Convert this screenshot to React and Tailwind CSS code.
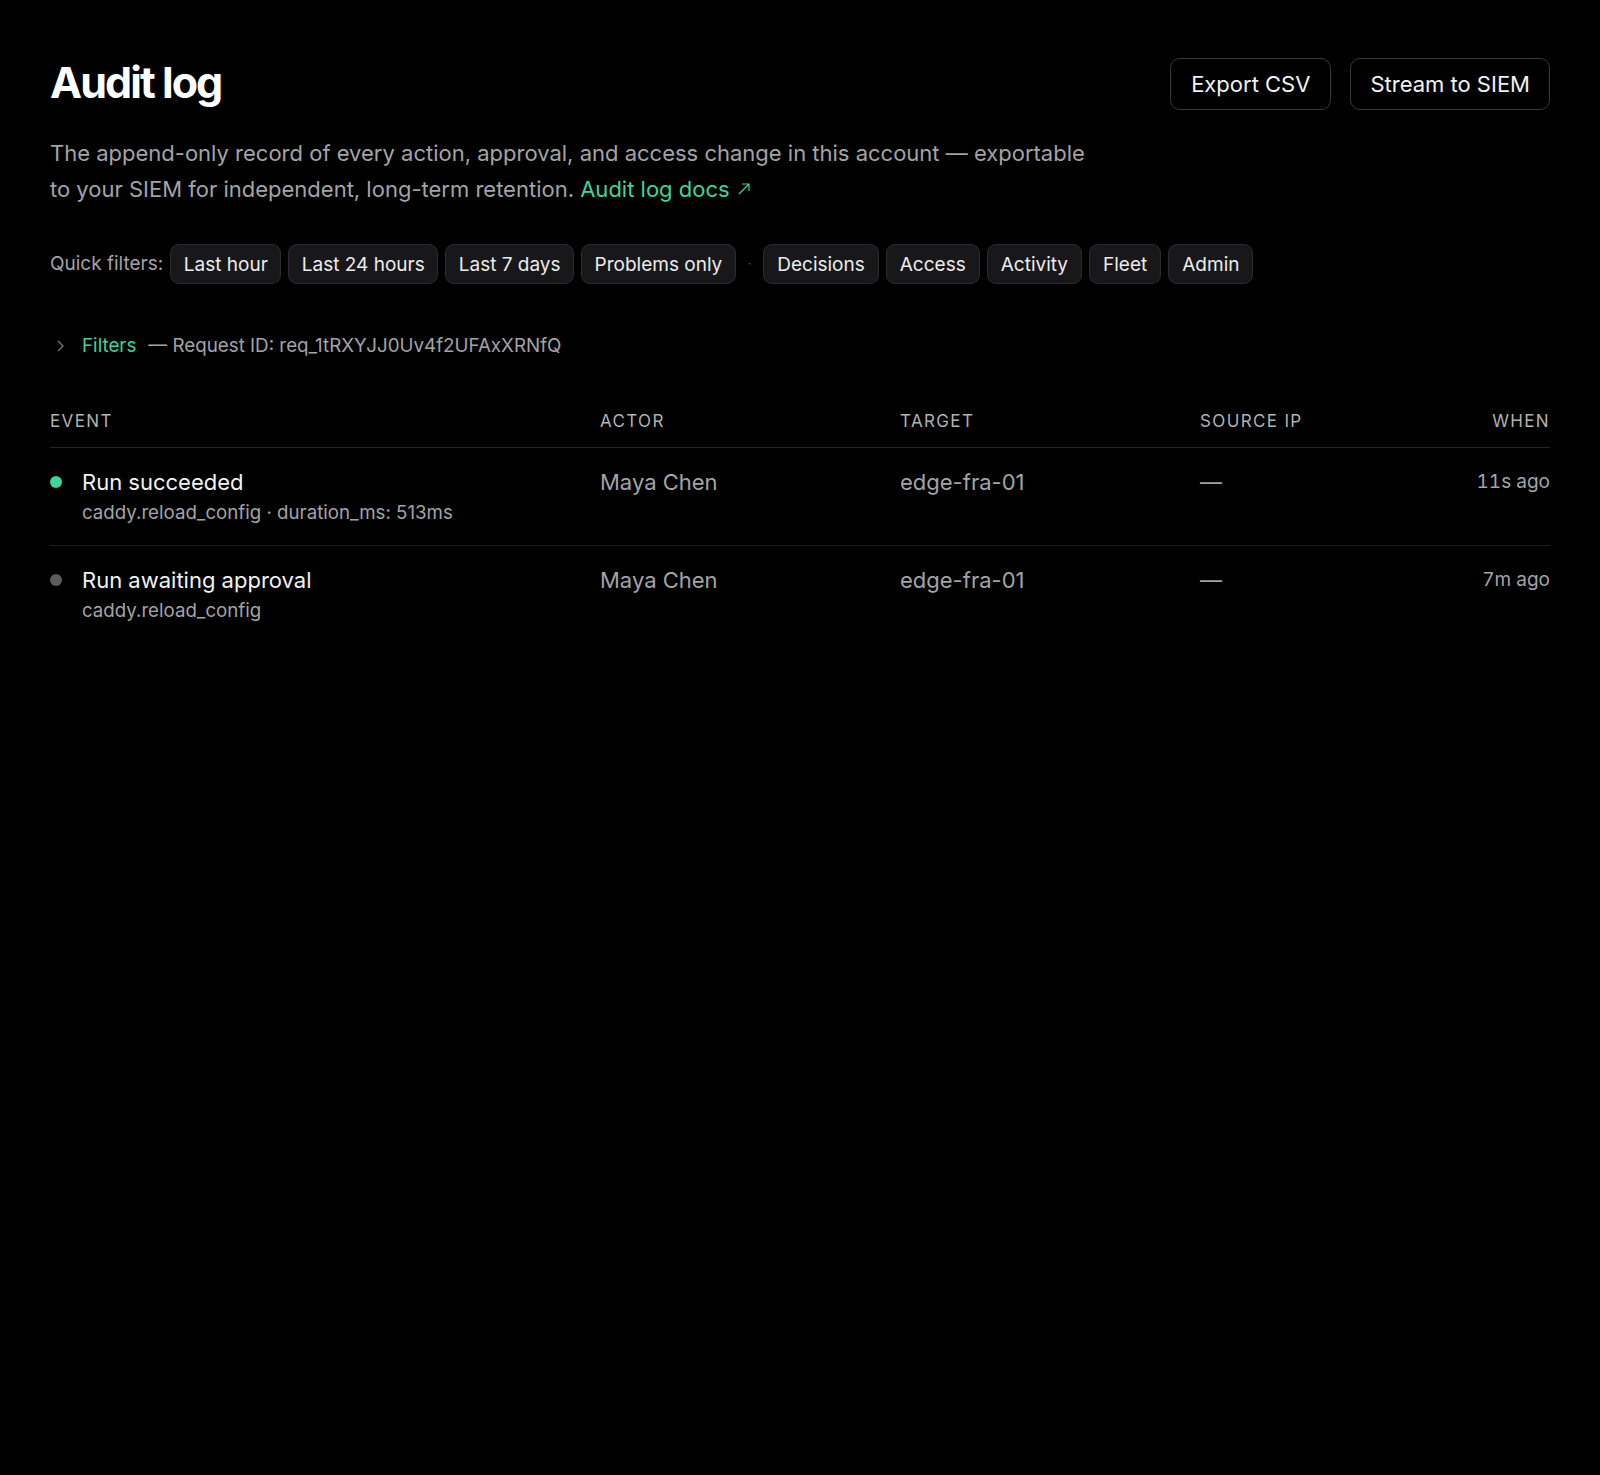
import React from 'react';

const quick = ['Last hour', 'Last 24 hours', 'Last 7 days', 'Problems only'];
const kinds = ['Decisions', 'Access', 'Activity', 'Fleet', 'Admin'];

const rows = [
  { title: 'Run succeeded', sub: 'caddy.reload_config · duration_ms: 513ms', ok: true, actor: 'Maya Chen', target: 'edge-fra-01', ip: '—', when: '11s ago' },
  { title: 'Run awaiting approval', sub: 'caddy.reload_config', ok: false, actor: 'Maya Chen', target: 'edge-fra-01', ip: '—', when: '7m ago' },
];

function Chip({ children, wide }) {
  return (
    <button className={`h-[40px] ${wide ? 'px-[13px]' : 'px-[12.5px]'} rounded-[9px] bg-[#18181a] border border-[#2c2c2f] text-[19px] text-[#ececec] leading-none`}>
      {children}
    </button>
  );
}

export default function App() {
  return (
    <div className="min-h-screen bg-black text-white" style={{ fontFamily: 'Inter, "Liberation Sans", sans-serif' }}>
      <div className="px-[50px] pt-[58px]">
        <div className="flex items-start justify-between">
          <h1 className="text-[43px] font-bold tracking-[-0.045em] leading-none mt-[3px]">Audit log</h1>
          <div className="flex gap-[19px]">
            <button className="h-[52px] px-[20px] rounded-[10px] border border-[#3a3a3d] text-[22px] text-[#f2f2f2]">Export CSV</button>
            <button className="h-[52px] px-[19px] rounded-[10px] border border-[#3a3a3d] text-[22px] text-[#f2f2f2]">Stream to SIEM</button>
          </div>
        </div>

        <p className="mt-[25px] max-w-[1050px] text-[22px] leading-[36px] text-[#a3a3a8]">
          The append-only record of every action, approval, and access change in this account — exportable to your SIEM for independent, long-term retention.{' '}
          <a className="text-[#3dd598]">Audit log docs</a>
          <svg className="inline-block ml-[7px] -mt-[4px] w-[14px] h-[14px] text-[#3dd598]" viewBox="0 0 14 14" fill="none" stroke="currentColor" strokeWidth="1.2">
            <path d="M2 12L12 2M5 2h7v7" />
          </svg>
        </p>

        <div className="mt-[37px] flex items-center gap-[7px]">
          <span className="text-[19px] text-[#a3a3a8]">Quick filters:</span>
          {quick.map((q) => <Chip key={q}>{q}</Chip>)}
          <span className="mx-[5px] text-[#555] text-[12px]">·</span>
          {kinds.map((q) => <Chip key={q} wide>{q}</Chip>)}
        </div>

        <div className="mt-[48px] flex items-center text-[18.8px]">
          <svg className="w-[16px] h-[16px] ml-[2px] mr-[14px] text-[#7a7a7e]" viewBox="0 0 16 16" fill="none" stroke="currentColor" strokeWidth="1.3">
            <path d="M6 3l5 5-5 5" />
          </svg>
          <span className="text-[#3dd598]">Filters</span>
          <span className="ml-[12px] text-[#a3a3a8]">— Request ID: req_1tRXYJJ0Uv4f2UFAxXRNfQ</span>
        </div>

        <div className="mt-[49px]">
          <div className="grid grid-cols-[550px_300px_300px_1fr_auto] leading-[24px] pb-[14px] border-b border-[#262628] text-[17px] tracking-[0.08em] text-[#b0b0b4]">
            <div>EVENT</div>
            <div>ACTOR</div>
            <div>TARGET</div>
            <div>SOURCE IP</div>
            <div className="text-right">WHEN</div>
          </div>
          {rows.map((r) => (
            <div key={r.title} className="grid grid-cols-[550px_300px_300px_1fr_auto] pt-[19px] pb-[17px] border-b border-[#1e1e20] last:border-b-0">
              <div className="flex gap-[20px]">
                <span className={`mt-[9px] w-[12px] h-[12px] rounded-full ${r.ok ? 'bg-[#3dd598]' : 'bg-[#5c5c60]'}`} />
                <div>
                  <div className="text-[22px] leading-[30px] text-[#f2f2f2]">{r.title}</div>
                  <div className="mt-[1px] text-[18.7px] leading-[30px] text-[#a3a3a8]">{r.sub}</div>
                </div>
              </div>
              <div className="text-[22px] leading-[30px] text-[#a3a3a8]">{r.actor}</div>
              <div className="text-[22px] leading-[30px] text-[#a3a3a8]">{r.target}</div>
              <div className="text-[22px] leading-[30px] text-[#a3a3a8]">{r.ip}</div>
              <div className="text-[19px] leading-[30px] text-[#a3a3a8] text-right tabular-nums">{r.when}</div>
            </div>
          ))}
        </div>
      </div>
    </div>
  );
}
